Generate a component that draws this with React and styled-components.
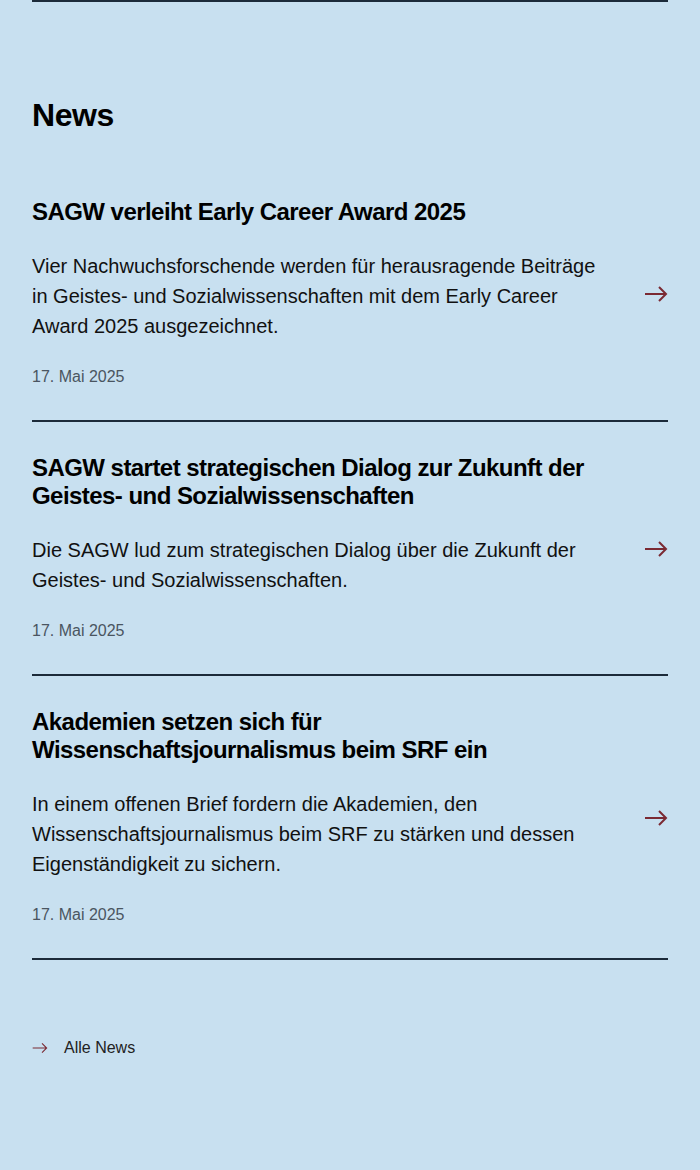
import styled, { createGlobalStyle } from "styled-components";

const GlobalStyle = createGlobalStyle`
  html, body {
    margin: 0;
    padding: 0;
    background: #c8e0f0;
  }
  body {
    font-family: "Liberation Sans", Arial, sans-serif;
    color: #111;
  }
`;

const Section = styled.section`
  padding: 0 32px 110px;
  background: #c8e0f0;
  min-height: 1170px;
  box-sizing: border-box;
`;

const TopRule = styled.hr`
  margin: 0;
  border: 0;
  border-top: 2px solid #1c2b3a;
`;

const Heading = styled.h2`
  margin: 93px 0 31px;
  font-size: 32px;
  line-height: 40px;
  font-weight: 700;
  letter-spacing: -0.4px;
  color: #000;
`;

const List = styled.ul`
  list-style: none;
  margin: 0;
  padding: 0;
`;

const Item = styled.li`
  display: flex;
  align-items: center;
  gap: 20px;
  padding: 32px 0 31px;
  border-bottom: 2px solid #1c2b3a;
`;

const Content = styled.div`
  flex: 1;
  max-width: 580px;
`;

const Title = styled.h3`
  margin: 0 0 25px;
  font-size: 24px;
  line-height: 28px;
  font-weight: 700;
  letter-spacing: -0.55px;
  color: #000;
`;

const Teaser = styled.p`
  margin: 0 0 24px;
  font-size: 20px;
  line-height: 30px;
  color: #111;
`;

const Date = styled.div`
  font-size: 16px;
  line-height: 24px;
  color: #4a5561;
`;

const ArrowBox = styled.div`
  margin-left: auto;
  display: flex;
  color: #7b2a33;
`;

const MoreLink = styled.a`
  display: inline-flex;
  align-items: center;
  gap: 16px;
  margin-top: 76px;
  font-size: 16px;
  line-height: 24px;
  color: #222;
  text-decoration: none;
`;

const LinkIcon = styled.span`
  display: flex;
  color: #7b2a33;
`;

const Arrow = ({ size = 24 }) => (
  <svg width={size} height={size} viewBox="0 0 24 24" fill="none" stroke="currentColor" strokeWidth={size > 20 ? 2 : 1.6} strokeLinecap="butt" strokeLinejoin="miter">
    <path d="M1 12h21M15 5l7 7-7 7" />
  </svg>
);

const news = [
  {
    title: "SAGW verleiht Early Career Award 2025",
    teaser:
      "Vier Nachwuchsforschende werden für herausragende Beiträge in Geistes- und Sozialwissenschaften mit dem Early Career Award 2025 ausgezeichnet.",
    date: "17. Mai 2025",
  },
  {
    title: "SAGW startet strategischen Dialog zur Zukunft der Geistes- und Sozialwissenschaften",
    teaser: "Die SAGW lud zum strategischen Dialog über die Zukunft der Geistes- und Sozialwissenschaften.",
    date: "17. Mai 2025",
  },
  {
    title: "Akademien setzen sich für Wissenschaftsjournalismus beim SRF ein",
    teaser:
      "In einem offenen Brief fordern die Akademien, den Wissenschaftsjournalismus beim SRF zu stärken und dessen Eigenständigkeit zu sichern.",
    date: "17. Mai 2025",
  },
];

export default function App() {
  return (
    <>
      <GlobalStyle />
      <Section>
        <TopRule />
        <Heading>News</Heading>
        <List>
          {news.map((n) => (
            <Item key={n.title}>
              <Content>
                <Title>{n.title}</Title>
                <Teaser>{n.teaser}</Teaser>
                <Date>{n.date}</Date>
              </Content>
              <ArrowBox>
                <Arrow />
              </ArrowBox>
            </Item>
          ))}
        </List>
        <MoreLink href="#">
          <LinkIcon>
            <Arrow size={16} />
          </LinkIcon>
          Alle News
        </MoreLink>
      </Section>
    </>
  );
}
